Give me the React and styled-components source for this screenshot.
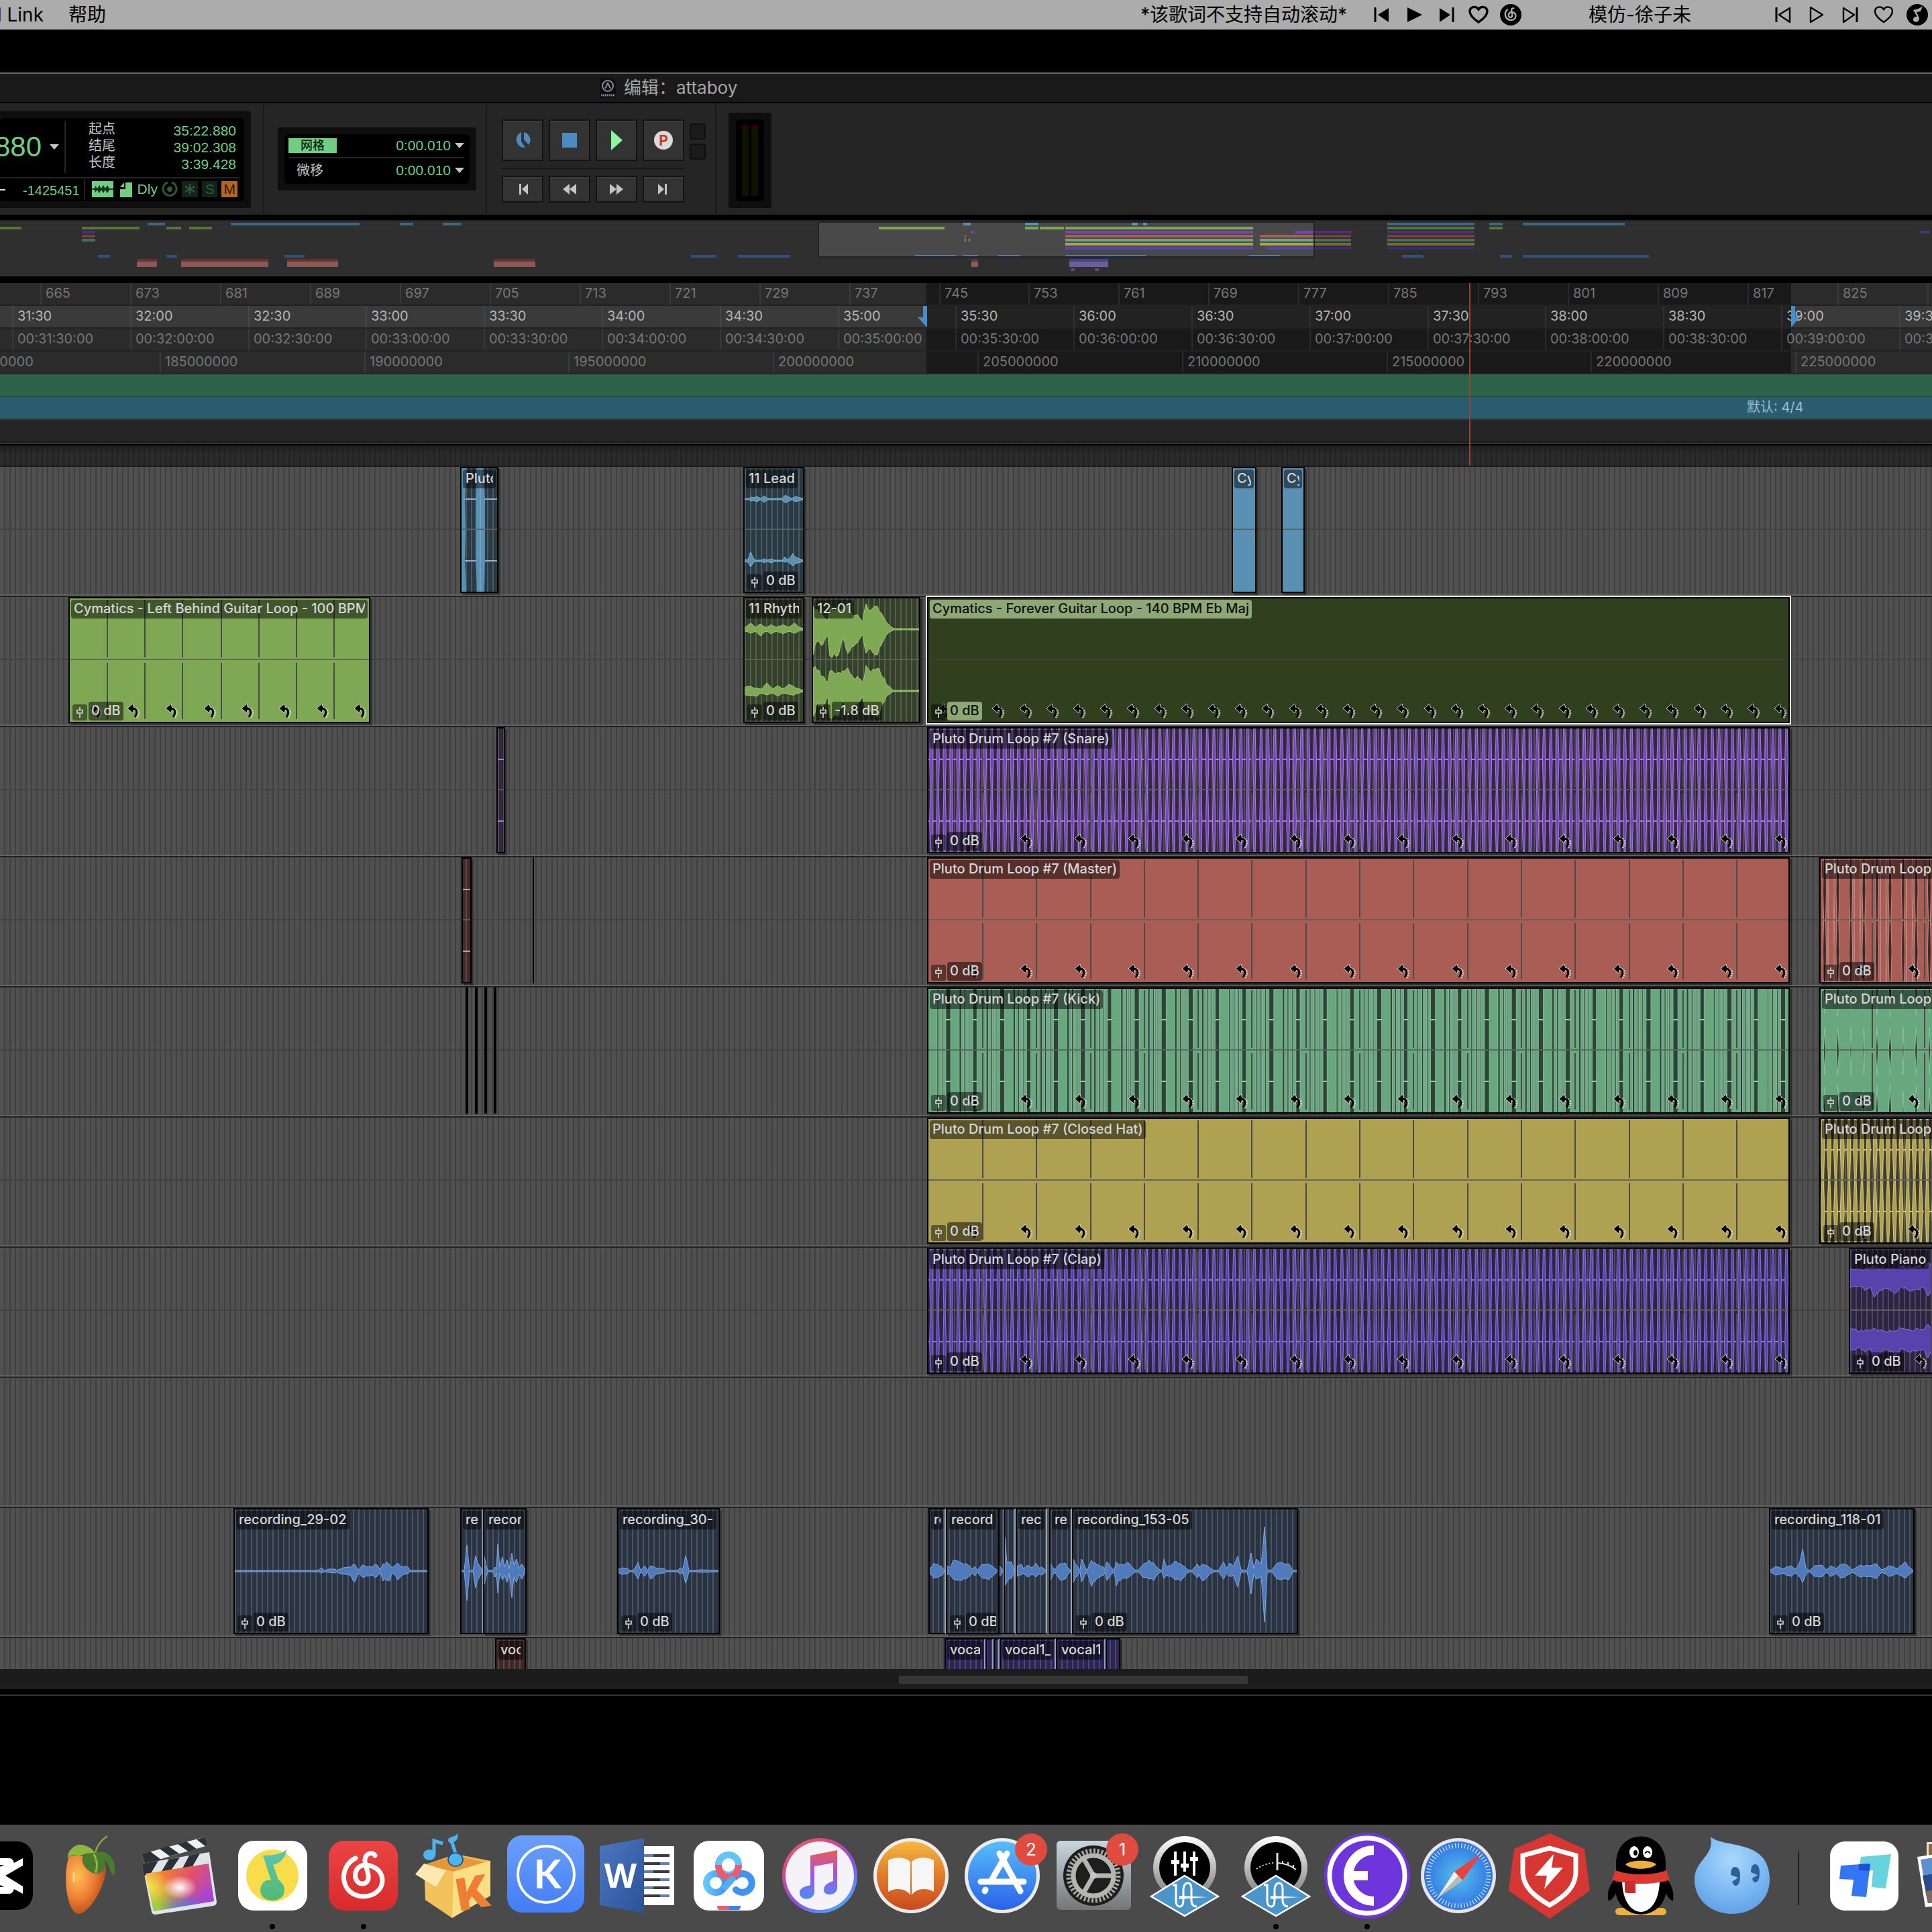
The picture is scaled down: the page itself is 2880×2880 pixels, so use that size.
import React from "react";
import styled, { createGlobalStyle, css } from "styled-components";

const Global = createGlobalStyle`
  * { box-sizing: border-box; }
  html, body { margin: 0; background: #000; }
  body { font-family: Inter, "Noto Sans CJK SC", sans-serif; font-size: 20px; overflow-x: hidden; }
  button, select { font: inherit; color: inherit; background: none; border: 0; padding: 0; margin: 0; appearance: none; }
  svg { display: block; flex: none; }
`;

/* ---------- shell ---------- */

const Screen = styled.div`
  min-height: 100vh;
  display: flex;
  flex-direction: column;
  overflow: hidden;
`;

const MenuBar = styled.header`
  height: 44px;
  display: flex;
  align-items: center;
  background: #acacac;
  color: #000;
  font-size: 28px;
  line-height: 44px;
  white-space: nowrap;
  padding-right: 6px;
`;

const ClippedItem = styled.button`
  width: 65px;
  margin-right: 37px;
  overflow: hidden;
  display: flex;
  justify-content: flex-end;
`;

const StatusArea = styled.div`
  margin-left: auto;
  display: flex;
  align-items: center;
`;

const Player = styled.div`
  display: flex;
  align-items: center;
  gap: ${(p) => p.$gap}px;
  margin: 0 ${(p) => p.$after}px 0 ${(p) => p.$before}px;
`;

const Window = styled.main`
  margin-top: 64px;
  border-top: 2px solid #666;
  background: #252525;
`;

const TitleBar = styled.div`
  height: 44px;
  border-bottom: 2px solid #000;
  background: #191919;
  color: #a5a5a5;
  font-size: 26px;
  line-height: 42px;
  padding-left: 894px;
  display: flex;
  align-items: center;
  gap: 12px;
`;

/* ---------- toolbar ---------- */

const Toolbar = styled.div`
  height: 174px;
  border-bottom: 8px solid #000;
  display: flex;
`;

const Section = styled.section`
  width: ${(p) => p.$w}px;
  border-right: 2px solid #1a1a1a;
  padding: ${(p) => p.$pad};
`;

const Panel = styled.div`
  background: #0e0e0e;
  padding: ${(p) => p.$pad};
`;

const Lcd = styled.div`
  height: ${(p) => p.$h}px;
  background: #000;
  border-radius: 6px;
  font-family: "Liberation Sans", "Noto Sans CJK SC", sans-serif;
  font-size: 21px;
`;

const LcdTop = styled.div`
  height: 90px;
  margin-right: 6px;
  border-bottom: 2px solid #242424;
  display: flex;
  padding-top: 4px;
`;

const Counter = styled.div`
  width: 98px;
  height: 78px;
  border-right: 2px solid #242424;
  display: flex;
  align-items: center;
  justify-content: flex-end;
  gap: 12px;
  padding-right: 8px;
  overflow: hidden;
  color: #6fce82;
  font-size: 42px;
`;

const Fields = styled.dl`
  flex: 1;
  margin: 0;
  padding-left: 34px;
  padding-right: 6px;
`;

const Field = styled.div`
  display: flex;
  justify-content: space-between;
  height: 25px;
  line-height: 25px;
  dt { color: #c4c4c4; font-size: 20px; }
  dd { margin: 0; color: #6fce82; padding-top: 2px; }
`;

const LcdBottom = styled.div`
  height: 32px;
  display: flex;
  align-items: center;
  gap: 6px;
  padding-right: 10px;
  color: #6fce82;
`;

const Cursor = styled.span`
  width: 129px;
  height: 30px;
  font-size: 20px;
  line-height: 34px;
  border-right: 2px solid #242424;
  display: flex;
  justify-content: space-between;
  padding-right: 6px;
  margin-right: 4px;
  &::before { content: ""; width: 8px; height: 2px; background: #ddd; margin-top: 15px; }
`;

const Flag = styled.button`
  width: 24px;
  height: 24px;
  line-height: 24px;
  text-align: center;
  color: ${(p) => p.$fg || "#2c5a36"};
  background: ${(p) => p.$bg || "#12241a"};
`;

const GridRow = styled.div`
  height: 36px;
  margin: 0 8px 0 6px;
  display: flex;
  align-items: center;
  ${(p) => p.$line && css`border-bottom: 2px solid #242424;`}
`;

const GridButton = styled.button`
  width: 72px;
  height: 22px;
  font-size: 18px;
  font-weight: 500;
  line-height: 22px;
  text-align: center;
  background: #6fce82;
  color: #0a2410;
`;

const NudgeLabel = styled.label`
  width: 72px;
  padding-left: 12px;
  font-size: 20px;
  line-height: 24px;
  color: #c4c4c4;
`;

const ValueSelect = styled.select`
  width: 110px;
  margin-left: auto;
  margin-right: 6px;
  color: #6fce82;
  text-align: right;
  text-align-last: right;
  line-height: 24px;
`;

const Transport = styled.div`
  display: grid;
  grid-template-columns: repeat(4, 62px) 24px;
  column-gap: 8px;
`;

const TransportButton = styled.button`
  height: ${(p) => p.$h}px;
  background: #333;
  border: 2px solid #131313;
  box-shadow: inset 0 2px 0 #3c3c3c;
  display: flex;
  align-items: center;
  justify-content: center;
`;

const Lights = styled.div`
  display: grid;
  gap: 6px;
  padding-top: 6px;
  align-content: start;
`;

const Light = styled.span`
  height: 24px;
  border: 2px solid #0f0f0f;
  border-radius: 4px;
  background: #1b1b1b;
`;

const Rule = styled.hr`
  grid-column: 1 / 5;
  width: 100%;
  height: 2px;
  margin: 10px 0;
  border: 0;
  background: #161616;
`;

const MeterPanel = styled.div`
  margin: 14px 0 0 18px;
  width: 64px;
  height: 142px;
  padding: 10px 11px;
  background: #0e0e0e;
`;

const MeterWell = styled.div`
  width: 42px;
  height: 122px;
  border-radius: 6px;
  background: #000;
  display: flex;
  justify-content: center;
  gap: 4px;
  padding: 8px;
`;

const MeterBar = styled.span`
  width: 10px;
  background: linear-gradient(#330000 0 6px, #0c1300 6px);
`;

/* ---------- overview ---------- */

const Overview = styled.div`
  position: relative;
  height: 94px;
  border-top: 2px solid #222;
  border-bottom: 10px solid #000;
  background: #2f2f2f;
`;

const View = styled.div`
  position: absolute;
  left: 1219px;
  top: 0;
  width: 741px;
  height: 54px;
  background: #494949;
  border: 2px solid #232323;
`;

const Mini = styled.span`
  position: absolute;
  background: ${(p) => p.$c};
`;

/* ---------- rulers ---------- */

const Rulers = styled.div`
  position: relative;
`;

const Ruler = styled.div`
  position: relative;
  height: 34px;
  overflow: hidden;
  background: ${(p) => (p.$main ? "#3a3a3a" : "#2b2b2b")};
  border-bottom: 2px solid #222;
  color: ${(p) => (p.$main ? "#b4b4b4" : "#767676")};
`;

const Selected = styled.span`
  position: absolute;
  left: 1381px;
  width: 1289px;
  top: 0;
  bottom: 0;
  background: rgba(0, 0, 0, 0.4);
`;

const Tick = styled.span`
  position: absolute;
  top: 0;
  height: 32px;
  padding-left: 6px;
  line-height: 31px;
  border-left: 2px solid rgba(125, 125, 125, 0.18);
`;

const Marker = styled.svg`
  position: absolute;
  top: 0;
`;

const Band = styled.div`
  height: ${(p) => p.$h}px;
  background: ${(p) => p.$bg};
  border-bottom: 2px solid ${(p) => p.$line};
  color: #9cc0cc;
  line-height: 31px;
  padding-left: 2604px;
`;

const RulerEnd = styled.div`
  height: 6px;
  background: linear-gradient(#1b1b1b 0 2px, #333 2px 4px, #000 4px);
`;

const DarkLane = styled.div`
  height: 32px;
  border-bottom: 2px solid #1d1d1d;
  background: linear-gradient(#1118, transparent 12px),
    repeating-linear-gradient(90deg, #2b2b2b 0 6px, #222 6px 8px);
`;

const Playhead = styled.span`
  position: absolute;
  left: 2190px;
  top: 0;
  bottom: 2px;
  width: 2px;
  background: #a63c2d;
`;

/* ---------- tracks ---------- */

const Tracks = styled.div`
  position: relative;
`;

const Track = styled.div`
  position: relative;
  height: ${(p) => (p.$short ? 46 : 194)}px;
  overflow: ${(p) => (p.$short ? "hidden" : "visible")};
  background: ${(p) => (p.$stereo ? "linear-gradient(transparent 92px, #424242 92px 94px, transparent 94px)," : "")}
    ${(p) => (p.$short ? "" : "linear-gradient(transparent 190px, #626262 190px 192px, #222 192px),")}
    repeating-linear-gradient(90deg, #505050 0 6px, #404040 6px 8px);
`;

const Sliver = styled.div`
  position: absolute;
  top: 0;
  height: 188px;
  background: #000;
`;

const ClipBox = styled.div`
  position: absolute;
  top: 0;
  height: 188px;
  border: 2px solid #000;
  overflow: hidden;
  background: ${(p) => p.$bg};
  box-shadow: 3px 3px 0 rgba(0, 0, 0, 0.35);
  font-weight: 500;
  ${(p) => p.$selected && css`outline: 2px solid #eee; z-index: 1; box-shadow: none;`}
  ${(p) => p.$cut && css`border-right: 2px solid #91a6b6; box-shadow: none;`}
`;

const Wave = styled.svg`
  position: absolute;
  inset: 0;
`;

const ClipName = styled.span`
  position: absolute;
  left: 2px;
  top: 2px;
  max-width: calc(100% - 4px);
  height: 28px;
  line-height: 27px;
  padding: 0 4px;
  border-radius: 4px;
  background: ${(p) => (p.$selected ? "#8ea777" : "rgba(0, 0, 0, 0.48)")};
  color: ${(p) => (p.$selected ? "#0c1206" : "#d6d6d6")};
  span { display: block; overflow: hidden; white-space: nowrap; }
`;

const Gain = styled.span`
  position: absolute;
  left: 4px;
  bottom: 2px;
  display: flex;
  align-items: flex-end;
  gap: 2px;
  max-width: calc(100% - 6px);
  overflow: hidden;
`;

const GainIcon = styled.span`
  flex: none;
  width: 22px;
  height: 24px;
  border-radius: 3px;
  background: rgba(0, 0, 0, 0.45);
  padding: 3px 5px;
`;

const GainValue = styled.span`
  height: 28px;
  line-height: 27px;
  padding: 0 4px;
  border-radius: 4px;
  white-space: nowrap;
  overflow: hidden;
  background: ${(p) => (p.$selected ? "#8ea777" : "rgba(0, 0, 0, 0.5)")};
  color: ${(p) => (p.$selected ? "#0c1206" : "#d6d6d6")};
`;

const ScrollStrip = styled.div`
  height: 30px;
  padding: 10px 0 0 1340px;
  background: #1c1c1c;
`;

const Thumb = styled.div`
  width: 520px;
  height: 12px;
  background: #373737;
`;

const WindowFoot = styled.div`
  height: 10px;
  background: #000;
  border-bottom: 2px solid #333;
`;

/* ---------- dock ---------- */

const Dock = styled.nav`
  margin-top: auto;
  height: 160px;
  background: #4a4a4a;
  display: flex;
  overflow: hidden;
  & > :first-child { margin-left: -70px; }
`;

const DockItem = styled.button`
  position: relative;
  flex: none;
  width: 136px;
  height: 160px;
`;

const Badge = styled.span`
  position: absolute;
  left: 87px;
  top: 13px;
  width: 48px;
  height: 48px;
  border-radius: 50%;
  background: #df4c3f;
  color: #fff;
  font-size: 26px;
  line-height: 48px;
  text-align: center;
`;

const Running = styled.span`
  position: absolute;
  left: 64px;
  top: 148px;
  width: 8px;
  height: 8px;
  border-radius: 50%;
  background: #000;
`;

const DockDivider = styled.span`
  flex: none;
  width: 62px;
  display: flex;
  justify-content: center;
  padding: 40px 0;
  &::before { content: ""; width: 2px; background: #1c1c1c; }
`;

/* ---------- data ---------- */

const C = {
  teal: { f: "#5a90b2", l: "#86b6d4", d: "#2a3a45" },
  green: { f: "#7ea854", l: "#a0cc74", d: "#34402a" },
  violet: { f: "#7646b4", l: "#a37fe0", d: "#342840" },
  red: { f: "#aa5d54", l: "#cf9a93", d: "#402926" },
  mint: { f: "#69a87f", l: "#9bceae", d: "#2f4237" },
  gold: { f: "#afa152", l: "#d2c684", d: "#403c26" },
  indigo: { f: "#5643ab", l: "#8877d6", d: "#2b2543" },
  blue: { f: "#4f7abb", l: "#86a9dc", d: "#2a3344" },
  wine: { f: "#aa5d54", l: "#cf9a93", d: "#402626" },
  plum: { f: "#5643ab", l: "#8877d6", d: "#2c2455" },
};

const hash = (n) => {
  const s = Math.sin(n * 127.1 + 11.7) * 43758.5453;
  return s - Math.floor(s);
};

function envelope(points, w, c, seed = 0) {
  const top = [];
  const bottom = [];
  for (let i = 0; i < points.length - 1; i += 1) {
    const [x0, u0, d0 = u0] = points[i];
    const [x1, u1, d1 = u1] = points[i + 1];
    const steps = Math.max(1, Math.round((x1 - x0) / 3));
    for (let s = 0; s < steps; s += 1) {
      const t = s / steps;
      const k = s === 0 ? 1 : 0.8 + hash(x0 + s * 3 + seed) * 0.35;
      top.push([x0 + (x1 - x0) * t, c - (u0 + (u1 - u0) * t) * k]);
      bottom.push([x0 + (x1 - x0) * t, c + (d0 + (d1 - d0) * t) * k]);
    }
  }
  top.push([w, c - 1]);
  bottom.push([w, c + 1]);
  return "M" + [...top, ...bottom.reverse()].map(([x, y]) => x.toFixed(1) + " " + y.toFixed(1)).join("L") + "Z";
}

const every = (first, pitch, last) => {
  const out = [];
  for (let x = first; x <= last; x += pitch) out.push(Math.round(x));
  return out;
};

const drums = (name, color, wave) => ({
  x: 1382, w: 1286, name, db: "0 dB", color, wave, loops: every(1451, 80.3, 2660), seams: every(1464, 80.3, 2600),
});
const drums2 = (name, color, wave) => ({
  x: 2712, w: 320, name, db: "0 dB", color, wave, loops: [2776, 2854], seams: [2790, 2868],
});

const TRACKS = [
  [
    { x: 686, w: 57, name: "Pluto", color: "teal", wave: "columns" },
    { x: 1108, w: 91, name: "11 Lead", db: "0 dB", color: "teal", wave: "stereo",
      pts: [[0, 1], [7, 1], [10, 3], [14, 2], [18, 4], [24, 1], [29, 5], [34, 1], [56, 1], [61, 6], [66, 3], [70, 1], [76, 4], [83, 1]],
      pts2: [[0, 1], [5, 2], [9, 13, 9], [15, 1], [26, 1], [29, 3], [33, 1], [40, 3], [44, 1], [57, 1], [60, 6, 2], [64, 1], [72, 11, 8], [78, 1]] },
    { x: 1836, w: 37, name: "Cym", color: "teal", wave: "solid" },
    { x: 1910, w: 35, name: "Cym", color: "teal", wave: "solid" },
  ],
  [
    { x: 102, w: 450, name: "Cymatics - Left Behind Guitar Loop - 100 BPM", db: "0 dB", color: "green", wave: "solid",
      loops: [144, 200, 257, 314, 370, 426, 482, 538], seams: [159, 215, 271, 329, 385, 441, 497] },
    { x: 1108, w: 91, name: "11 Rhyth", db: "0 dB", color: "green", wave: "stereo",
      pts: [[0, 3], [9, 9, 6], [16, 3], [24, 8, 10], [32, 3], [40, 7], [48, 3], [57, 7], [66, 3], [74, 9, 6], [82, 2]],
      pts2: [[0, 5], [9, 7], [16, 4, 8], [26, 3], [33, 12, 6], [42, 3], [50, 8], [58, 3], [66, 10, 5], [74, 6], [83, 2]] },
    { x: 1210, w: 162, name: "12-01", db: "-1.8 dB", color: "green", wave: "stereo",
      pts: [[0, 34, 38], [6, 30, 18], [14, 22, 24], [22, 14, 10], [25, 30, 40], [38, 28, 38], [44, 30, 14], [52, 34, 36], [60, 20, 26], [66, 22, 20], [74, 12, 8], [79, 38, 36], [86, 28, 30], [96, 34, 38], [104, 20, 18], [112, 8, 6], [120, 1], [158, 1]] },
    { x: 1382, w: 1286, name: "Cymatics - Forever Guitar Loop - 140 BPM Eb Maj", db: "0 dB", color: "green", wave: "none", selected: true,
      loops: every(1409, 40.2, 2660) },
  ],
  [{ x: 740, w: 13, color: "violet", wave: "line" }, drums("Pluto Drum Loop #7 (Snare)", "violet", "spikes")],
  [
    { x: 688, w: 15, color: "red", wave: "line" },
    { x: 794, w: 2, wave: "bar" },
    drums("Pluto Drum Loop #7 (Master)", "red", "solid"),
    drums2("Pluto Drum Loop #7 (Master)", "red", "slits"),
  ],
  [
    { x: 694, w: 4, wave: "bar" },
    { x: 708, w: 4, wave: "bar" },
    { x: 722, w: 4, wave: "bar" },
    { x: 736, w: 4, wave: "bar" },
    drums("Pluto Drum Loop #7 (Kick)", "mint", "kick"),
    drums2("Pluto Drum Loop #7 (Kick)", "mint", "lens"),
  ],
  [drums("Pluto Drum Loop #7 (Closed Hat)", "gold", "solid"), drums2("Pluto Drum Loop #7 (Closed Hat)", "gold", "fat")],
  [
    drums("Pluto Drum Loop #7 (Clap)", "indigo", "spikes"),
    { x: 2756, w: 280, name: "Pluto Piano", db: "0 dB", color: "indigo", wave: "stereo", loops: [2864], seams: [2878],
      pts: [[0, 18, 12], [14, 16, 9], [22, 18, 16], [30, 17, 10], [36, 20, 26], [50, 16, 12], [60, 18, 16], [68, 16, 20], [76, 20, 10], [90, 17, 16], [100, 20, 14], [110, 18, 12], [116, 26, 24], [122, 18, 12], [200, 18, 12]] },
  ],
  [],
  [
    { x: 348, w: 291, name: "recording_29-02", db: "0 dB", color: "blue", wave: "mono",
      pts: [[0, 1], [124, 1], [129, 5, 3], [134, 1], [140, 3, 2], [150, 3], [152, 1], [157, 3, 4], [162, 5, 4], [171, 6], [179, 10, 16], [184, 1, 3], [190, 9], [196, 6, 7], [203, 6], [211, 10, 9], [217, 2], [221, 11, 15], [226, 13], [231, 9, 14], [234, 5, 3], [238, 8, 5], [243, 12, 13], [248, 6, 7], [255, 7, 4], [259, 5, 3], [261, 1], [285, 1]] },
    { x: 686, w: 35, name: "re", color: "blue", wave: "mono", cut: true, pts: [[0, 1], [4, 1], [8, 39, 44], [12, 1], [17, 1], [21, 23, 25], [26, 1]] },
    { x: 720, w: 65, name: "recor", color: "blue", wave: "mono",
      pts: [[0, 22, 20], [5, 1], [13, 1], [16, 6, 9], [18, 3], [20, 41, 33], [23, 6, 3], [27, 21, 13], [30, 6], [34, 17], [37, 3], [41, 27, 40], [44, 9], [48, 18, 17], [52, 4], [56, 11, 12], [60, 4]] },
    { x: 920, w: 153, name: "recording_30-", db: "0 dB", color: "blue", wave: "mono",
      pts: [[0, 3], [6, 5], [13, 4], [17, 1], [22, 1], [29, 13, 12], [33, 1], [39, 8], [43, 1], [48, 8, 12], [55, 5], [68, 4, 3], [71, 1], [88, 1], [92, 5], [95, 1], [100, 23, 18], [105, 1], [118, 1], [121, 2], [123, 1]] },
    { x: 1384, w: 26, name: "re", color: "blue", wave: "mono", cut: true, pts: [[0, 4], [6, 12, 11], [14, 8], [20, 8]] },
    { x: 1410, w: 79, name: "record", db: "0 dB", color: "blue", wave: "mono",
      pts: [[0, 8, 5], [5, 6], [9, 16, 12], [22, 12, 14], [30, 10], [38, 3], [41, 7], [45, 1], [52, 10], [62, 11, 13], [70, 8]] },
    { x: 1488, w: 9, color: "blue", wave: "mono", cut: true, pts: [[0, 8], [4, 2]] },
    { x: 1496, w: 18, color: "blue", wave: "mono", cut: true, pts: [[0, 50, 22], [3, 12, 16], [7, 14, 10], [12, 11]] },
    { x: 1514, w: 47, name: "rec", color: "blue", wave: "mono", cut: true, pts: [[0, 8], [6, 11, 6], [10, 3], [16, 9], [22, 5], [28, 12, 9], [34, 4], [40, 9]] },
    { x: 1564, w: 34, name: "re", color: "blue", wave: "mono", cut: true, pts: [[0, 12, 14], [6, 2], [11, 8], [16, 11, 14], [22, 12], [28, 2]] },
    { x: 1598, w: 337, name: "recording_153-05", db: "0 dB", color: "blue", wave: "mono",
      pts: [[0, 18, 17], [10, 1], [12, 18, 16], [20, 1], [27, 16, 23], [35, 10, 11], [45, 6], [47, 1], [50, 14], [58, 4], [61, 1], [64, 14, 22], [73, 9, 11], [83, 12, 9], [91, 2], [96, 1], [104, 10, 9], [113, 16, 12], [120, 12, 14], [129, 2], [132, 1], [135, 18, 11], [139, 6], [153, 15, 13], [160, 11, 15], [171, 2], [177, 1], [185, 11, 10], [187, 5], [193, 10, 15], [202, 6], [210, 1], [217, 1], [224, 14, 12], [229, 4], [233, 12, 8], [239, 6], [245, 22, 24], [250, 2], [259, 1], [265, 27, 34], [269, 4], [273, 18, 12], [280, 10, 8], [285, 66, 76], [289, 2], [295, 1], [303, 11], [312, 12], [321, 11, 13], [327, 1], [330, 6]] },
    { x: 2637, w: 217, name: "recording_118-01", db: "0 dB", color: "blue", wave: "mono",
      pts: [[0, 2], [8, 7, 6], [18, 3], [30, 8], [38, 3], [43, 11, 8], [48, 33, 17], [53, 5], [58, 1], [66, 8], [76, 9], [84, 2], [90, 8], [98, 4], [106, 10], [114, 9, 6], [122, 2], [134, 9], [146, 8], [158, 11], [166, 2], [178, 8], [190, 4], [202, 13, 10], [208, 5]] },
  ],
  [
    { x: 738, w: 46, name: "voca", color: "wine", wave: "none" },
    { x: 1408, w: 61, name: "voca", color: "plum", wave: "none", cut: true },
    { x: 1469, w: 12, color: "plum", wave: "none", cut: true },
    { x: 1481, w: 9, color: "plum", wave: "none", cut: true },
    { x: 1490, w: 84, name: "vocal1_", color: "plum", wave: "none", cut: true },
    { x: 1574, w: 74, name: "vocal1", color: "plum", wave: "none", cut: true },
    { x: 1648, w: 22, color: "plum", wave: "none" },
  ],
];

/* ---------- clip drawing ---------- */

const CH = [46, 138];

function spindles(w, pitch, first, edge, mid) {
  let d = "";
  for (let x = first; x < w; x += pitch) {
    CH.forEach((c) => {
      d += `M${x - edge} ${c - 46}L${x - mid} ${c}L${x - edge} ${c + 46}H${x + edge}L${x + mid} ${c}L${x + edge} ${c - 46}Z`;
    });
  }
  return d;
}

function WaveShape({ clip, w }) {
  const c = C[clip.color];
  const lines = CH.map((y) => <rect key={y} x="0" y={y - 1} width={w} height="2" fill={c.l} />);
  switch (clip.wave) {
    case "line":
      return lines;
    case "columns":
      return (
        <>
          {lines}
          <path d="M0 0H8L5 46L6 92L5 138L7 184H0ZM22 0H33L35 46V138L34 184H23L21 138V46Z" fill={c.f} />
          <path d="M28 0V184" stroke="#86b6d4" />
        </>
      );
    case "spikes":
      return (
        <>
          {lines}
          <path d={spindles(w, 10.04, 4, 1.1, 2.3)} fill={c.f} stroke={c.l} strokeWidth="1" />
        </>
      );
    case "fat":
      return (
        <>
          {lines}
          <path d={spindles(w, 9.75, 3, 1.2, 3)} fill={c.f} stroke={c.l} strokeWidth="1" />
        </>
      );
    case "slits":
      return (
        <>
          <rect width={w} height="184" fill={c.f} />
          <path d={spindles(w, 19.5, 6, 1.4, 2.6)} fill={c.d} stroke={c.l} strokeWidth="0.8" />
          <path d={spindles(w, 39, 11, 0.2, 0.5) + spindles(w, 39, 20, 0.4, 0.8)} fill={c.d} stroke={c.l} strokeWidth="0.8" />
        </>
      );
    case "lens": {
      let d = "";
      for (let x = 6; x < w; x += 19.5) {
        const k = 1 + hash(Math.round(x)) * 1.4;
        d += `M${x - k} 0L${x} ${20 + k * 10}L${x + k} 0ZM${x} 58L${x - k} 92L${x} 128L${x + k} 92ZM${x - k} 184L${x} ${164 - k * 10}L${x + k} 184Z`;
      }
      return (
        <>
          <rect width={w} height="184" fill={c.f} />
          <path d={d} fill={c.d} stroke={c.l} strokeWidth="0.8" />
        </>
      );
    }
    case "kick": {
      const slits = [];
      for (let x = 29; x < w; x += 40.15) {
        const k = hash(Math.round(x));
        slits.push([x - 3, k > 0.5 ? 7 : 6], [x + 17, k > 0.4 ? 3 : 2], [x + 24, 1.5], [x + 28, 1], [x - 16, 2], [x - 9, 1.5]);
      }
      return (
        <>
          <rect width={w} height="184" fill={c.f} />
          {slits.map(([x, s]) => (
            <g key={x}>
              <rect x={x} y="-1" width={s} height="186" fill={c.d} stroke={c.l} strokeWidth="0.6" />
              {s > 5 && CH.map((y) => <rect key={y} x={x} y={y - 1} width={s} height="2" fill={c.l} />)}
            </g>
          ))}
        </>
      );
    }
    case "solid":
      return <rect width={w} height="184" fill={c.f} />;
    case "mono":
      return <path d={envelope(clip.pts, w, 92)} fill={c.f} stroke={c.l} strokeWidth="1" />;
    case "stereo":
      return (
        <>
          <path d={envelope(clip.pts, w, 46)} fill={c.f} stroke={c.l} strokeWidth="1" />
          <path d={envelope(clip.pts2 || clip.pts, w, 138, 5)} fill={c.f} stroke={c.l} strokeWidth="1" />
        </>
      );
    default:
      return null;
  }
}

function Clip({ clip }) {
  if (clip.wave === "bar") return <Sliver style={{ left: clip.x, width: clip.w }} />;
  const c = C[clip.color];
  const w = clip.w - 4;
  const off = (8 - ((clip.x + 2) % 8)) % 8;
  const bg = clip.selected
    ? "#30401f"
    : `repeating-linear-gradient(90deg, transparent 0 6px, rgba(205, 215, 205, 0.2) 6px 8px) ${off - 8}px 0 / calc(100% + 16px) 100%, ${c.d}`;
  const split = clip.wave !== "mono" && clip.color !== "plum" && clip.color !== "wine";
  return (
    <ClipBox $bg={bg} $selected={clip.selected} $cut={clip.cut} style={{ left: clip.x, width: clip.w }}>
      <Wave width={w} height="184" aria-hidden="true">
        <WaveShape clip={clip} w={w} />
        {(clip.seams || []).map((x) => (
          <path key={x} d={`M${x - clip.x - 1} 2V88M${x - clip.x - 1} 96V180`} stroke="#4a4a4a" strokeWidth="2" />
        ))}
        {split && <rect y="90" width={w} height="2" fill={clip.selected ? "#3d3d3d" : "#5d625d"} opacity="0.9" />}
        {(clip.loops || []).map((x) => (
          <g key={x} transform={`translate(${x - clip.x - 13} 157)`}>
            <path d="M10 8C17 8 19 14 13 21" fill="none" stroke="#d8d8d8" strokeWidth="5.5" strokeDasharray="2 1" opacity="0.85" />
            <path d="M1 7L9 0L11 7L9 14Z" fill="#000" stroke="#d8d8d8" strokeWidth="1" />
            <path d="M8 7C15 7 17 13 12 20" fill="none" stroke="#000" strokeWidth="3" />
          </g>
        ))}
      </Wave>
      {clip.name && (
        <ClipName $selected={clip.selected}>
          <span>{clip.name}</span>
        </ClipName>
      )}
      {clip.db && (
        <Gain>
          <GainIcon>
            <svg width="12" height="18" viewBox="0 0 12 18" fill="none" stroke="#d6d6d6" strokeWidth="1.6">
              <path d="M6 1V5M6 10V17M2 5.5H10V10H2Z" />
            </svg>
          </GainIcon>
          <GainValue $selected={clip.selected}>{clip.db}</GainValue>
        </Gain>
      )}
    </ClipBox>
  );
}

/* ---------- overview data: [colour, top, [start, end]...] ---------- */

const MINI = [
  ["#3f6781", 2, [220, 246], [344, 536], [596, 616], [660, 688], [2068, 2198], [2220, 2240], [2270, 2422]],
  ["#56763a", 8, [0, 32], [122, 208], [248, 270], [282, 316], [2068, 2198], [2220, 2240]],
  ["#4d3077", 14, [122, 142], [1960, 2016], [2068, 2198], [2862, 2876]],
  ["#783f39", 20, [122, 142], [1960, 2014], [2068, 2198]],
  ["#467256", 26, [122, 142], [1960, 2014], [2068, 2198]],
  ["#776d34", 32, [1960, 2014], [2068, 2198]],
  ["#392c73", 38, [1960, 2016], [2068, 2198]],
  ["#34507f", 50, [146, 164], [248, 264], [424, 454], [1030, 1068], [1100, 1178], [2090, 2122], [2236, 2254], [2270, 2458]],
  ["#5a90b2", 2, [1436, 1447], [1528, 1548], [1687, 1696], [1704, 1710]],
  ["#7ea854", 8, [1310, 1408], [1528, 1548], [1550, 1586], [1588, 1868]],
  ["#7646b4", 14, [1448, 1452], [1588, 1868], [1930, 1958]],
  ["#aa5d54", 20, [1438, 1440], [1588, 1868], [1878, 1958]],
  ["#69a87f", 26, [1438, 1440], [1444, 1446], [1588, 1868], [1878, 1958]],
  ["#afa152", 32, [1588, 1868], [1878, 1958]],
  ["#5643ab", 38, [1588, 1868], [1888, 1958]],
];

const MINI_LOW = [[1364, 1426], [1436, 1458], [1488, 1520], [1588, 1708], [1862, 1908]];
const MINI_RED = [[204, 234], [270, 400], [428, 504], [736, 798], [1448, 1458]];

function MiniClip({ c, top, span, h = 4 }) {
  return <Mini $c={c} style={{ left: span[0], top, width: span[1] - span[0], height: h }} />;
}

const pad = (n) => String(n).padStart(2, "0");
const bars = Array.from({ length: 22 }, (_, i) => [Math.round(60 + i * 133.95), 665 + i * 8]);
const minutes = Array.from({ length: 17 }, (_, i) => {
  const t = 31.5 + i / 2;
  return [Math.round(18 + i * 175.8), pad(Math.floor(t)) + ":" + (t % 1 ? "30" : "00")];
});
const samples = Array.from({ length: 10 }, (_, i) => [Math.round(-67 + i * 304.8), 180000000 + i * 5000000]);

function RulerRow({ ticks, main, children }) {
  return (
    <Ruler $main={main}>
      <Selected />
      {ticks.map(([x, label]) => (
        <Tick key={x} style={{ left: x }}>{label}</Tick>
      ))}
      {children}
    </Ruler>
  );
}

/* ---------- icons ---------- */

const Caret = () => (
  <svg width="14" height="8" viewBox="0 0 14 8"><path d="M0 0H14L7 8Z" fill="#c4c4c4" /></svg>
);

const I = ({ children }) => (
  <svg width="32" height="32" viewBox="0 0 32 32">{children}</svg>
);

function PlayerIcons({ filled }) {
  const p = filled ? { fill: "#000" } : { fill: "none", stroke: "#000", strokeWidth: 2.4, strokeLinejoin: "round" };
  return (
    <>
      <I><path d="M6 5V27" stroke="#000" strokeWidth="3" /><path d="M26 6V27L10 16Z" {...p} /></I>
      <I><path d={filled ? "M6 5L28 16L6 27Z" : "M7 5L25 16L7 27Z"} {...p} /></I>
      <I><path d="M26 5V27" stroke="#000" strokeWidth="3" /><path d="M6 6V27L22 16Z" {...p} /></I>
      <I>
        <path d="M16 27C4 19 3 14 3 11C3 4 12 2 16 8C20 2 29 4 29 11C29 14 28 19 16 27Z" fill="none" stroke="#000" strokeWidth={filled ? 3.4 : 2.4} />
      </I>
      {filled ? (
        <I>
          <circle cx="16" cy="16" r="16" />
          <path d="M12 8C6 11 6 23 16 24C25 24 26 13 18 12C12 12 11 20 16 20C20 19 18 13 17 9C17 6 20 6 21 7" fill="none" stroke="#acacac" strokeWidth="2.4" />
        </I>
      ) : (
        <I>
          <circle cx="16" cy="16" r="16" />
          <path d="M24 3L21 11L15 12L19 21C19 29 9 28 10 22C11 19 14 18 16 19L10 9C16 8 21 6 24 3Z" fill="#acacac" />
        </I>
      )}
    </>
  );
}

const S = ({ children }) => (
  <svg width="136" height="160" viewBox="0 0 136 160">{children}</svg>
);

const Grad = ({ id, stops, x2 = 0, y2 = 1 }) => (
  <linearGradient id={id} x1="0" y1="0" x2={x2} y2={y2}>
    {stops.map((s, i) => <stop key={i} offset={i / (stops.length - 1)} stopColor={s} />)}
  </linearGradient>
);

const Glow = ({ id, cx, cy, r, color }) => (
  <radialGradient id={id} cx={cx} cy={cy} r={r}>
    <stop offset="0" stopColor={color} />
    <stop offset="1" stopColor={color} stopOpacity="0" />
  </radialGradient>
);

const CapCut = () => (
  <S>
    <rect x="16" y="25" width="103" height="102" rx="23" />
    <path d="M50 50H84Q89 50 91 57L104 50V61L78 76L104 92V103L91 96Q89 103 84 103H50V93H76L50 80V72L76 60H50Z" fill="#fff" />
  </S>
);

const Fruit = () => (
  <S>
    <defs><radialGradient id="fr" cx=".3" cy=".35" r=".8"><stop offset="0" stopColor="#ffc05a" /><stop offset=".5" stopColor="#ee7d33" /><stop offset="1" stopColor="#a83c12" /></radialGradient></defs>
    <path d="M76 44C77 34 84 24 94 17" fill="none" stroke="#8aa83c" strokeWidth="2.5" />
    <path d="M37 48C48 42 86 50 92 62C94 86 68 134 50 133C33 130 27 72 37 48Z" fill="url(#fr)" />
    <path d="M35 50C34 38 48 26 60 31C68 33 74 38 76 44C66 42 60 44 50 47C44 44 38 46 35 50Z" fill="#8db63f" />
    <path d="M76 42C96 34 110 56 104 76C96 70 98 60 90 52C94 66 86 76 72 72C56 64 52 48 62 43Z" fill="#4a7a2c" />
    <path d="M74 44C80 56 80 64 76 72" fill="none" stroke="#8db63f" strokeWidth="3" />
    <path d="M44 72V84" stroke="#ffd98a" strokeWidth="3" strokeLinecap="round" />
  </S>
);

const SCREEN = "M15 73L109 58L117 114L27 129Z";

const FinalCut = () => (
  <S>
    <defs>
      <Grad id="fc1" x2={1} y2={0.4} stops={["#f5b83a", "#ee7a3a", "#e0506a", "#b44ac0"]} />
      <Glow id="fc2" cx=".5" cy=".5" r=".25" color="#fff" />
      <Glow id="fc3" cx=".1" cy=".95" r=".6" color="#8be040" />
      <Glow id="fc4" cx=".6" cy="1" r=".4" color="#3f78f8" />
      <Glow id="fc5" cx="1" cy=".8" r=".4" color="#a040d8" />
      <Glow id="fc6" cx="0" cy=".5" r=".4" color="#f6ee48" />
    </defs>
    <path d="M9 44L104 18L108 31L14 58Z" fill="#eef0f2" />
    <path d="M9 44L22 40L38 52L14 58ZM36 36L49 32L65 43L51 47ZM63 29L76 25L91 36L79 40ZM91 22L104 18L108 31L104 32Z" fill="#2c3138" />
    <path d="M10 58L110 41L121 115Q121 120 116 121L30 134Q25 134 24 130Z" fill="#dfe4e8" />
    <path d="M10 58L34 54L22 74L13 76ZM50 51L66 49L53 68L38 71ZM80 46L96 43L85 62L70 65Z" fill="#2c3138" />
    {["fc1", "fc3", "fc4", "fc5", "fc6", "fc2"].map((id) => <path key={id} d={SCREEN} fill={`url(#${id})`} />)}
  </S>
);

const QQMusic = () => (
  <S>
    <defs><Grad id="qm" stops={["#55c6b4", "#55ba72"]} /></defs>
    <rect x="17" y="24" width="103" height="104" rx="23" fill="#fff" />
    <circle cx="68" cy="76" r="39" fill="#f9dc4a" />
    <path d="M89 37C84 43 70 46 54 46L66 83C56 80 50 90 50 98C50 118 86 118 86 98C86 90 82 86 77 82L69 60C80 57 88 50 89 37Z" fill="url(#qm)" />
  </S>
);

const NetEase = () => (
  <S>
    <defs><Grad id="ne" stops={["#ea4443", "#d92a2c"]} /></defs>
    <rect x="16" y="24" width="103" height="104" rx="23" fill="url(#ne)" />
    <path d="M56 50C30 62 32 106 68 107C104 106 106 62 70 60C50 62 52 90 68 88C84 84 68 60 70 52C71 42 82 40 85 46" fill="none" stroke="#fff" strokeWidth="7" strokeLinecap="round" />
  </S>
);

const KBox = () => (
  <S>
    <path d="M22 60L70 44L121 54L108 108L64 139L24 112Z" fill="#f4bc50" />
    <path d="M22 60L72 46L112 56L66 70Z" fill="#e8963a" />
    <path d="M24 60L66 70L64 139L24 112Z" fill="#f3c25a" />
    <path d="M66 70L121 54V106L64 139Z" fill="#fbdf85" />
    <path d="M22 58L9 74L40 93L55 68Z" fill="#fae9b0" />
    <text x="70" y="126" fontSize="66" fontWeight="900" fill="#ef7e35" fontFamily="Inter, sans-serif" transform="rotate(-10 90 100)">K</text>
    <path d="M37 45V24L50 28M62 20L70 46" fill="none" stroke="#4db4ee" strokeWidth="5" />
    <ellipse cx="30" cy="45" rx="9" ry="8" fill="#4db4ee" />
    <ellipse cx="69" cy="52" rx="11" ry="10" fill="#4db4ee" stroke="#1c4a78" strokeWidth="1.5" />
    <path d="M58 24C58 16 70 20 72 12C74 24 68 26 61 28Z" fill="#4db4ee" />
  </S>
);

const KBlue = () => (
  <S>
    <defs><Grad id="kl" stops={["#6aa0f8", "#447df6"]} /></defs>
    <rect x="10" y="16" width="115" height="115" rx="22" fill="url(#kl)" />
    <circle cx="68" cy="74" r="42" fill="none" stroke="#fff" strokeWidth="4" />
    <text x="70" y="95" fontSize="60" fontWeight="700" fill="#fff" textAnchor="middle" fontFamily="Lato, sans-serif">K</text>
  </S>
);

const Word = () => (
  <S>
    <defs><Grad id="wd" x2={1} stops={["#4c77bf", "#2b5299"]} /></defs>
    <rect x="72" y="32" width="51" height="88" fill="#fff" />
    {[44, 56, 68, 80, 92, 104].map((y, i) => (
      <g key={y}>
        <rect x="78" y={y} width="38" height="4" fill="#3a3a3a" />
        <rect x={i % 2 ? 102 : 78} y={y} width="14" height="4" fill="#5d7fb8" />
      </g>
    ))}
    <path d="M12 32L78 20V132L12 120Z" fill="url(#wd)" />
    <text x="43" y="94" fontSize="50" fontWeight="700" fill="#fff" textAnchor="middle" fontFamily="'Open Sans', sans-serif">W</text>
  </S>
);

const Baidu = () => (
  <S>
    <defs><Grad id="bd" x2={1} y2={0} stops={["#62c8fa", "#3f93f5"]} /></defs>
    <rect x="16" y="24" width="105" height="104" rx="23" fill="#fff" />
    <g fill="none" strokeWidth="10">
      <circle cx="68" cy="60" r="15" stroke="#64c4fa" />
      <circle cx="49" cy="87" r="14" stroke="url(#bd)" />
      <path d="M78 78A14 14 0 1 1 79 97" stroke="#3f93f5" strokeLinecap="round" />
      <path d="M53 60C53 84 83 84 83 60" stroke="#ee5a6e" />
      <path d="M60 96L76 78" stroke="#4fb0f8" />
    </g>
    <path d="M51 121H68V127H55Q51 127 51 121Z" fill="#ee5a6e" />
    <path d="M68 121H86Q86 127 82 127H68Z" fill="#3f7ff5" />
  </S>
);

const ITunes = () => (
  <S>
    <defs>
      <Grad id="it" x2={0.7} stops={["#f0654f", "#d4478a", "#8a52ee", "#48a8f8"]} />
      <Grad id="it2" stops={["#ee5a52", "#a454e8", "#4a8cf5"]} />
    </defs>
    <circle cx="68" cy="76" r="56" fill="url(#it)" />
    <circle cx="68" cy="76" r="51" fill="#f4f4f8" />
    <path d="M54 46L94 38V94C94 106 74 108 74 97C74 88 84 86 88 84V57L60 62V100C60 114 38 114 38 102C38 92 50 92 54 90Z" fill="url(#it2)" />
  </S>
);

const Books = () => (
  <S>
    <defs><Grad id="bk" stops={["#f5b83e", "#e07a2c", "#c94a1e"]} /></defs>
    <circle cx="68" cy="76" r="56" fill="#ececec" />
    <circle cx="68" cy="76" r="51" fill="url(#bk)" />
    <path d="M34 53C44 47 62 48 67 56V105C60 94 44 94 34 100ZM102 53C92 47 74 48 69 56V105C76 94 92 94 102 100Z" fill="#f6f6f6" />
  </S>
);

const AppStore = () => (
  <S>
    <defs><Grad id="as" stops={["#57bdf8", "#2a62ea"]} /></defs>
    <circle cx="68" cy="76" r="56" fill="#ececec" />
    <circle cx="68" cy="76" r="51" fill="url(#as)" />
    <g stroke="#fff" strokeWidth="9" strokeLinecap="round">
      <path d="M75 43L53 81M64 43L95 99M36 85H100M43 97L42 99" />
    </g>
  </S>
);

const Settings = () => (
  <S>
    <defs><Grad id="st" stops={["#c8d6de", "#757575"]} /></defs>
    <rect x="13" y="24" width="111" height="103" rx="6" fill="url(#st)" />
    <circle cx="68" cy="76" r="45" fill="#1e1e1e" />
    <circle cx="68" cy="76" r="37" fill="none" stroke="#a9a9a4" strokeWidth="7" strokeDasharray="3 2.8" />
    <circle cx="68" cy="76" r="30" fill="none" stroke="#b5b5b0" strokeWidth="7" />
    <path d="M68 76L53 50M68 76L53 102M68 76H98" stroke="#b5b5b0" strokeWidth="7" />
    <circle cx="68" cy="76" r="5" fill="#c6c6c6" />
  </S>
);

const UA = ({ meter }) => (
  <S>
    <defs><Grad id={"ua" + (meter ? 1 : 0)} stops={["#fff", "#777"]} /></defs>
    <circle cx="68" cy="64" r="47" fill={"url(#ua" + (meter ? 1 : 0) + ")"} />
    <circle cx="68" cy="64" r="38" />
    {meter ? (
      <g fill="none" stroke="#ddd" strokeWidth="2">
        <path d="M39 66C48 60 58 57 66 57" strokeDasharray="2 3" />
        <path d="M71 57C82 58 92 62 98 67M78 54V58M86 56V61M94 60V65" />
        <path d="M70 42V68" strokeWidth="3" />
      </g>
    ) : (
      <g stroke="#fff" strokeWidth="4">
        <path d="M54 40V76M68 40V70M82 40V76" />
        <path d="M48 56H60M62 61H74M76 51H88" strokeWidth="6" />
      </g>
    )}
    <path d="M68 76L118 107L68 136L18 107Z" fill="#4a95c9" stroke="#fff" strokeWidth="2.5" />
    <path d="M50 90H55V115Q56 123 62 122Q66 121 66 112V96Q67 87 73 87Q78 87 78 96V114Q79 122 86 122" fill="none" stroke="#fff" strokeWidth="3" />
    <path d="M60 106L102 108L60 111Z" fill="#fff" />
  </S>
);

const ELogo = () => (
  <S>
    <circle cx="68" cy="76" r="64" fill="#6e35dc" />
    <circle cx="68" cy="76" r="56" fill="none" stroke="#fff" strokeWidth="7" />
    <path d="M78 38A38 38 0 1 0 78 114M42 76H69" fill="none" stroke="#fff" strokeWidth="14" />
  </S>
);

const Safari = () => (
  <S>
    <defs><radialGradient id="sf"><stop offset="0" stopColor="#58c2e8" /><stop offset="1" stopColor="#2f74e6" /></radialGradient></defs>
    <circle cx="68" cy="76" r="56" fill="#e6e6e6" />
    <circle cx="68" cy="76" r="51" fill="url(#sf)" />
    <circle cx="68" cy="76" r="45" fill="none" stroke="#d8eefb" strokeWidth="7" strokeDasharray="1.2 3.5" />
    <path d="M103 42L74 83L62 70Z" fill="#e4453c" />
    <path d="M62 70L74 83L36 110Z" fill="#f1f1f1" />
    <path d="M68 76L74 83L36 110Z" fill="#b9b9b9" />
  </S>
);

const Shield = () => (
  <S>
    <path d="M68 14L119 37L127 98L68 139L8 98L16 37Z" fill="#d73733" strokeLinejoin="round" stroke="#d73733" strokeWidth="2" />
    <path d="M68 35L107 46V70C107 92 92 106 68 120C44 106 28 92 28 70V46Z" fill="none" stroke="#fff" strokeWidth="7" />
    <path d="M74 44L46 76H64L60 96L88 64H71Z" fill="#fff" />
  </S>
);

const Penguin = () => (
  <S>
    <path d="M30 130C30 120 46 124 68 130C90 124 106 120 106 130Q106 135 98 135H38Q30 135 30 130Z" fill="#eeb040" />
    <path d="M30 80C22 90 16 100 20 114C26 112 30 104 33 98ZM106 80C114 90 118 100 116 114C110 112 106 104 103 98Z" />
    <ellipse cx="68" cy="96" rx="38" ry="38" />
    <path d="M31 70V58C31 4 105 4 105 58V70Z" />
    <path d="M40 82C40 146 96 146 96 82Z" fill="#fff" />
    <path d="M30 68C50 76 86 76 106 68L111 82C90 90 46 90 25 82Z" fill="#dc3a30" />
    <path d="M44 84H60V102H48Q44 102 44 98Z" fill="#c4302a" />
    <ellipse cx="58" cy="41" rx="7" ry="9" fill="#fff" />
    <ellipse cx="78" cy="41" rx="7" ry="9" fill="#fff" />
    <ellipse cx="60" cy="42" rx="3" ry="4" />
    <path d="M74 43Q78 37 82 43" fill="none" stroke="#000" strokeWidth="2" />
    <path d="M45 59C54 52 82 52 91 59C84 68 52 68 45 59Z" fill="#eeb040" />
  </S>
);

const Drop = () => (
  <S>
    <defs><radialGradient id="dp" cx=".5" cy=".3" r=".8"><stop offset="0" stopColor="#aad8fb" /><stop offset=".6" stopColor="#77b5f2" /><stop offset="1" stopColor="#5b97dc" /></radialGradient></defs>
    <path d="M36 18C56 36 124 20 124 82C124 114 98 133 68 133C36 133 12 112 12 82C12 52 42 48 36 18Z" fill="url(#dp)" />
    <path d="M72 63Q80 63 80 77Q80 90 74 91Q70 91 68 85L77 79L66 75Q66 63 72 63ZM102 59Q109 59 109 72Q109 85 103 86Q99 86 98 80L106 75L96 71Q96 59 102 59Z" fill="#2f5f96" />
  </S>
);

const Docs = () => (
  <S>
    <rect x="16" y="25" width="102" height="103" rx="22" fill="#fff" />
    <path d="M62 48L107 44L99 95L78 93L80 68L59 68Z" fill="#66d3de" />
    <path d="M32 61L76 58L70 108L48 106L51 82L30 81Z" fill="#3276f6" />
    <path d="M59 59L76 58L75 69L59 68Z" fill="#1d4fd8" />
  </S>
);

const Photos = () => (
  <S>
    <path d="M24 26H60V70H24Z" fill="#e8e2d4" />
    <path d="M27 29H60V60H27Z" fill="#8a6a3a" />
    <path d="M10 48L50 42V120L22 123Z" fill="#fff" />
    <path d="M15 52L50 47V114L26 117Z" fill="#5f8fd0" />
    <path d="M18 76L50 70V114L26 117Z" fill="#2c4a86" />
    <path d="M22 100L50 92V114L26 117Z" fill="#7c6a60" />
  </S>
);

const DOCK = [
  ["CapCut", <CapCut />],
  ["FL Studio", <Fruit />],
  ["Final Cut Pro", <FinalCut />],
  ["QQ Music", <QQMusic />, { running: true }],
  ["NetEase Music", <NetEase />, { running: true }],
  ["Kuwo box", <KBox />],
  ["K", <KBlue />],
  ["Word", <Word />],
  ["Baidu Netdisk", <Baidu />],
  ["iTunes", <ITunes />],
  ["Books", <Books />],
  ["App Store", <AppStore />, { badge: 2 }],
  ["System Preferences", <Settings />, { badge: 1 }],
  ["UA Console", <UA />],
  ["UA Meter", <UA meter />, { running: true }],
  ["E", <ELogo />, { running: true }],
  ["Safari", <Safari />],
  ["Shield", <Shield />],
  ["QQ", <Penguin />],
  ["Drop", <Drop />],
  null,
  ["Docs", <Docs />],
  ["Photos", <Photos />],
];

const LOCATE_BUTTONS = [
  ["Return to zero", "M7 4V20H10V4ZM20 4V20L11 12Z"],
  ["Rewind", "M12 4V20L2 12ZM22 4V20L12 12Z"],
  ["Fast forward", "M2 4V20L12 12ZM12 4V20L22 12Z"],
  ["Go to end", "M17 4V20H14V4ZM4 4V20L13 12Z"],
];

export default function App() {
  return (
    <Screen>
      <Global />
      <MenuBar>
        <ClippedItem>d Link</ClippedItem>
        <button>帮助</button>
        <StatusArea>
          <span>*该歌词不支持自动滚动*</span>
          <Player $gap={16} $before={36} $after={100}><PlayerIcons filled /></Player>
          <span>模仿-徐子未</span>
          <Player $gap={18} $before={121} $after={0}><PlayerIcons /></Player>
        </StatusArea>
      </MenuBar>

      <Window>
        <TitleBar>
          <svg width="24" height="30" viewBox="0 0 24 30">
            <path d="M0 0H18L24 6V30H0Z" fill="#0f0d14" />
            <circle cx="12" cy="12" r="8" fill="none" stroke="#8d8d92" strokeWidth="2" />
            <path d="M8 16L12 8L16 16" fill="none" stroke="#8d8d92" strokeWidth="2" />
            <path d="M2 26H22" stroke="#8d8d92" strokeWidth="3" strokeDasharray="2 1" />
          </svg>
          <span>编辑：attaboy</span>
        </TitleBar>

        <Toolbar>
          <Section $w={394} $pad="12px 18px 0 0">
            <Panel $pad="10px 10px 10px 0">
              <Lcd $h={124}>
                <LcdTop>
                  <Counter><span>35:22.880</span><Caret /></Counter>
                  <Fields>
                    <Field><dt>起点</dt><dd>35:22.880</dd></Field>
                    <Field><dt>结尾</dt><dd>39:02.308</dd></Field>
                    <Field><dt>长度</dt><dd>3:39.428</dd></Field>
                  </Fields>
                </LcdTop>
                <LcdBottom>
                  <Cursor>-1425451</Cursor>
                  <svg width="32" height="24" viewBox="0 0 32 24">
                    <rect width="32" height="24" fill="#6fce82" />
                    <path d="M0 11H4L5 7L8 11L11 6L14 11L17 6L20 11L23 6L26 11H32V13H26L23 18L20 13L17 18L14 13L11 18L8 13L5 17L4 13H0Z" fill="#12331a" />
                  </svg>
                  <svg width="24" height="24" viewBox="0 0 24 24">
                    <path d="M12 2H22V24H4V12H12Z" fill="#6fce82" /><path d="M10 2V9H4Z" fill="#6fce82" />
                  </svg>
                  <span>Dly</span>
                  <svg width="24" height="24" viewBox="0 0 24 24">
                    <path d="M15 2A10 10 0 1 1 9 2" fill="none" stroke="#2c5a36" strokeWidth="3" /><circle cx="12" cy="12" r="4" fill="#2c5a36" />
                  </svg>
                  <Flag aria-label="Solo safe">
                    <svg width="24" height="24" viewBox="0 0 24 24"><path d="M12 4V20M5 8L19 16M19 8L5 16" stroke="#2c5a36" strokeWidth="2.4" /></svg>
                  </Flag>
                  <Flag>S</Flag>
                  <Flag $bg="#b46525" $fg="#2c1605">M</Flag>
                </LcdBottom>
              </Lcd>
            </Panel>
          </Section>

          <Section $w={332} $pad="36px 14px 0 20px">
            <Panel $pad="10px">
              <Lcd $h={74}>
                <GridRow $line>
                  <GridButton>网格</GridButton>
                  <ValueSelect aria-label="网格"><option>0:00.010</option></ValueSelect>
                  <Caret />
                </GridRow>
                <GridRow>
                  <NudgeLabel htmlFor="nudge">微移</NudgeLabel>
                  <ValueSelect id="nudge"><option>0:00.010</option></ValueSelect>
                  <Caret />
                </GridRow>
              </Lcd>
            </Panel>
          </Section>

          <Section $w={342} $pad="24px 0 0 22px">
            <Transport>
              <TransportButton $h={62} aria-label="Online">
                <svg width="26" height="26" viewBox="0 0 26 26">
                  <path d="M11 1A12 12 0 0 0 17 24L11 15Z" fill="#4c8ac0" /><path d="M15 1A12 12 0 0 1 22 20L15 12Z" fill="#4c8ac0" />
                </svg>
              </TransportButton>
              <TransportButton $h={62} aria-label="Stop">
                <svg width="22" height="22"><rect width="22" height="22" fill="#4c8ac0" /></svg>
              </TransportButton>
              <TransportButton $h={62} aria-label="Play">
                <svg width="18" height="30" viewBox="0 0 18 30"><path d="M1 0L18 15L1 30Z" fill="#8cf5a0" /></svg>
              </TransportButton>
              <TransportButton $h={62} aria-label="Record">
                <svg width="28" height="28" viewBox="0 0 28 28">
                  <circle cx="14" cy="14" r="14" fill="#dadada" />
                  <text x="14" y="22" textAnchor="middle" fontSize="21" fontWeight="700" fill="#c9372b">P</text>
                </svg>
              </TransportButton>
              <Lights><Light /><Light /></Lights>
              <Rule />
              {LOCATE_BUTTONS.map(([label, d], i) => (
                <TransportButton key={label} $h={40} aria-label={label} style={{ gridColumn: i + 1 }}>
                  <svg width="24" height="24" viewBox="0 0 24 24"><path d={d} fill="#c4c4c4" /></svg>
                </TransportButton>
              ))}
            </Transport>
          </Section>

          <MeterPanel>
            <MeterWell><MeterBar /><MeterBar /></MeterWell>
          </MeterPanel>
        </Toolbar>

        <Overview>
          <View />
          {MINI.map(([c, top, ...spans]) => spans.map((s) => <MiniClip key={c + s[0]} c={c} top={top} span={s} />))}
          {MINI_LOW.map((s) => <MiniClip key={s[0]} c="#4f7abb" top={50} span={s} h={2} />)}
          {MINI_RED.map((s) => <MiniClip key={s[0]} c="linear-gradient(#6f2f2b 0 4px, #865b59 4px)" top={56} span={s} h={12} />)}
          <MiniClip c="linear-gradient(#4d3d8a 0 4px, #6a6095 4px)" top={56} span={[1594, 1652]} h={12} />
          <MiniClip c="#763f7a" top={70} span={[1596, 1602]} />
          <MiniClip c="#763f7a" top={70} span={[1632, 1638]} />
        </Overview>

        <Rulers>
          <RulerRow ticks={bars} />
          <RulerRow ticks={minutes} main>
            <Marker width="16" height="32" viewBox="0 0 16 32" style={{ left: 1367 }}><path d="M9 0H15V32L1 17H9Z" fill="#4a8ec8" /></Marker>
            <Marker width="16" height="32" viewBox="0 0 16 32" style={{ left: 2669 }}><path d="M1 0H7V16H15L1 32Z" fill="#4a8ec8" /></Marker>
          </RulerRow>
          <RulerRow ticks={minutes.map(([x, t]) => [x, `00:${t}:00`])} />
          <RulerRow ticks={samples} />
          <Band $h={34} $bg="#2d6348" $line="#23503a" />
          <Band $h={34} $bg="#2a5d70" $line="#333">默认: 4/4</Band>
          <Band $h={32} $bg="#252525" $line="#252525" />
          <RulerEnd />
          <DarkLane />
          <Playhead />
        </Rulers>

        <Tracks>
          {TRACKS.map((clips, i) => (
            <Track key={i} $stereo={i < 7} $short={i === TRACKS.length - 1}>
              {clips.map((clip) => <Clip key={clip.x} clip={clip} />)}
            </Track>
          ))}
        </Tracks>

        <ScrollStrip><Thumb /></ScrollStrip>
        <WindowFoot />
      </Window>

      <Dock>
        {DOCK.map((item, i) =>
          item ? (
            <DockItem key={item[0]} aria-label={item[0]}>
              {item[1]}
              {item[2]?.badge && <Badge>{item[2].badge}</Badge>}
              {item[2]?.running && <Running />}
            </DockItem>
          ) : (
            <DockDivider key={i} />
          )
        )}
      </Dock>
    </Screen>
  );
}
